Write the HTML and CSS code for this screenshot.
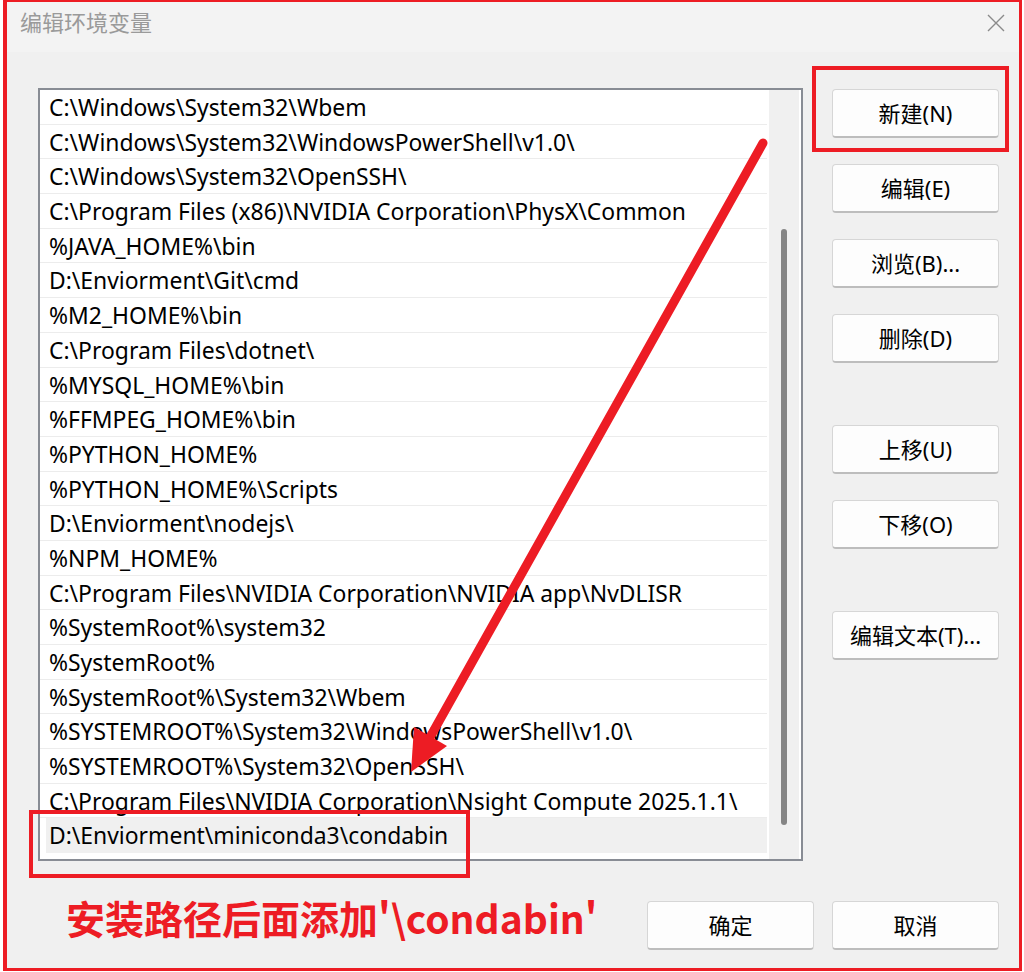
FILE: index.html
```html
<!DOCTYPE html>
<html lang="zh-CN">
<head>
<meta charset="utf-8">
<title>编辑环境变量</title>
<link rel="stylesheet" href="styles.css">
</head>
<body>
<div class="window">
  <div class="titlebar">
    <span class="title">编辑环境变量</span>
    <svg class="close" width="18" height="18" viewBox="0 0 18 18"><path d="M1 1 L17 17 M17 1 L1 17" stroke="#8a8a8a" stroke-width="1.4" fill="none"/></svg>
  </div>
  <div class="content">
    <div class="main">
      <div class="listbox">
        <div class="rows">
          <div class="row">C:\Windows\System32\Wbem</div>
          <div class="row">C:\Windows\System32\WindowsPowerShell\v1.0\</div>
          <div class="row">C:\Windows\System32\OpenSSH\</div>
          <div class="row">C:\Program Files (x86)\NVIDIA Corporation\PhysX\Common</div>
          <div class="row">%JAVA_HOME%\bin</div>
          <div class="row">D:\Enviorment\Git\cmd</div>
          <div class="row">%M2_HOME%\bin</div>
          <div class="row">C:\Program Files\dotnet\</div>
          <div class="row">%MYSQL_HOME%\bin</div>
          <div class="row">%FFMPEG_HOME%\bin</div>
          <div class="row">%PYTHON_HOME%</div>
          <div class="row">%PYTHON_HOME%\Scripts</div>
          <div class="row">D:\Enviorment\nodejs\</div>
          <div class="row">%NPM_HOME%</div>
          <div class="row">C:\Program Files\NVIDIA Corporation\NVIDIA app\NvDLISR</div>
          <div class="row">%SystemRoot%\system32</div>
          <div class="row">%SystemRoot%</div>
          <div class="row">%SystemRoot%\System32\Wbem</div>
          <div class="row">%SYSTEMROOT%\System32\WindowsPowerShell\v1.0\</div>
          <div class="row">%SYSTEMROOT%\System32\OpenSSH\</div>
          <div class="row">C:\Program Files\NVIDIA Corporation\Nsight Compute 2025.1.1\</div>
          <div class="row selected">D:\Enviorment\miniconda3\condabin</div>
        </div>
        <div class="scrolltrack"><div class="thumb"></div></div>
      </div>
      <div class="buttons">
        <button class="btn">新建(N)</button>
        <button class="btn">编辑(E)</button>
        <button class="btn">浏览(B)...</button>
        <button class="btn">删除(D)</button>
        <button class="btn sep">上移(U)</button>
        <button class="btn">下移(O)</button>
        <button class="btn sep">编辑文本(T)...</button>
      </div>
    </div>
    <div class="footer">
      <span class="note">安装路径后面添加'\condabin'</span>
      <button class="btn ok">确定</button>
      <button class="btn">取消</button>
    </div>
  </div>
  <div class="mark mark-new"></div>
  <div class="mark mark-row"></div>
  <svg class="arrow" width="1024" height="972" viewBox="0 0 1024 972">
    <path d="M763 143 L424 748" stroke="#ed1c24" stroke-width="9" stroke-linecap="round" fill="none"/>
    <polygon points="411,772 414,727 447,746" fill="#ed1c24"/>
  </svg>
</div>
</body>
</html>
```
FILE: styles.css
```css
html, body {
  margin: 0;
  padding: 0;
  background: #ffffff;
}
body {
  width: 1024px;
  height: 972px;
  overflow: hidden;
}
.window {
  position: relative;
  box-sizing: border-box;
  margin-left: 3px;
  width: 1019px;
  height: 971px;
  border-style: solid;
  border-color: #ed1c24;
  border-width: 2px 3px 3px 4px;
  background: #f0f0f0;
  display: flex;
  flex-direction: column;
  font-family: "Noto Sans", "Noto Sans CJK SC", sans-serif;
}
.titlebar {
  box-sizing: border-box;
  height: 50px;
  background: #f3f3f3;
  display: flex;
  align-items: flex-start;
  justify-content: space-between;
  padding: 8px 14px 0 13px;
  flex-shrink: 0;
}
.title {
  font-family: "Noto Sans CJK SC", sans-serif;
  font-size: 22px;
  color: #9a9a9a;
  line-height: 22px;
}
.close {
  margin-top: 4px;
}
.content {
  flex: 1;
  display: flex;
  flex-direction: column;
}
.main {
  display: flex;
  padding: 36px 0 0 31px;
}
.listbox {
  box-sizing: border-box;
  width: 765px;
  height: 773px;
  border: 2px solid #888c94;
  background: #ffffff;
  display: flex;
  padding: 0 2px 0 0;
}
.rows {
  width: 727px;
  display: flex;
  flex-direction: column;
}
.row {
  box-sizing: border-box;
  height: 34.7px;
  border-bottom: 1px solid #ececec;
  padding-left: 9px;
  padding-top: 1px;
  font-size: 22.9px;
  line-height: 33px;
  color: #000;
  white-space: nowrap;
  overflow: hidden;
}
.row.selected {
  background: #f0f0f0;
  margin-left: 6px;
  padding-left: 3px;
  border-bottom: none;
}
.scrolltrack {
  width: 30px;
  margin-left: 2px;
  background: #f0f0f0;
  position: relative;
}
.thumb {
  position: absolute;
  left: 12px;
  top: 139px;
  width: 6px;
  height: 596px;
  border-radius: 3px;
  background: #858585;
}
.buttons {
  display: flex;
  flex-direction: column;
  gap: 26px;
  margin-left: 29px;
  margin-top: 1px;
}
.btn {
  box-sizing: border-box;
  width: 167px;
  height: 49px;
  background: #fdfdfd;
  border: 1px solid #d6d6d6;
  border-bottom: 2px solid #bdbdbd;
  border-radius: 4px;
  font-family: "Noto Sans", "Noto Sans CJK SC", sans-serif;
  font-size: 22px;
  color: #000;
  padding: 0;
  line-height: 1;
}
.btn.sep {
  margin-top: 36px;
}
.footer {
  display: flex;
  align-items: center;
  margin-top: 40px;
  padding: 0 20px 0 59px;
  gap: 18px;
}
.note {
  font-family: "Noto Sans CJK SC", sans-serif;
  font-weight: 700;
  font-size: 39px;
  color: #ed1c24;
  line-height: 1;
  white-space: nowrap;
  margin-top: -16px;
}
.ok {
  margin-left: auto;
}
.mark {
  position: absolute;
  box-sizing: border-box;
  border: 4px solid #ed1c24;
}
.mark-new {
  left: 805px;
  top: 64px;
  width: 197px;
  height: 86px;
}
.mark-row {
  left: 22px;
  top: 808px;
  width: 441px;
  height: 68px;
}
.arrow {
  position: absolute;
  left: -7px;
  top: -2px;
  pointer-events: none;
}
```
